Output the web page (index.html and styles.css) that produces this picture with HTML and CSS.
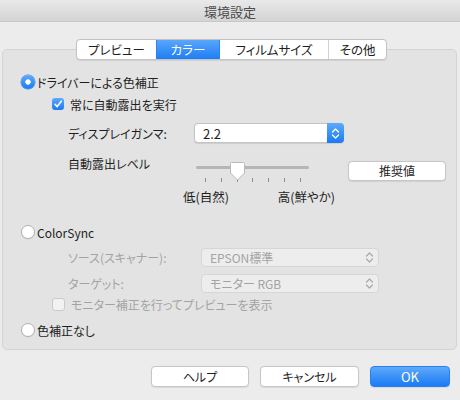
FILE: index.html
```html
<!DOCTYPE html>
<html lang="ja">
<head>
<meta charset="utf-8">
<link rel="stylesheet" href="styles.css">
</head>
<body>
<div class="titlebar">環境設定</div>
<div class="tabs">
  <div class="tab t1">プレビュー</div>
  <div class="tab t2 sel">カラー</div>
  <div class="tab t3">フィルムサイズ</div>
  <div class="tab t4">その他</div>
</div>
<div class="box">
  <div class="row r1"><span class="radio on"></span><span>ドライバーによる色補正</span></div>
  <div class="row r2"><span class="check on"><svg width="12" height="12" viewBox="0 0 12 12"><path d="M3 6.3 L5.2 8.6 L9.3 3.2" fill="none" stroke="#fff" stroke-width="1.6" stroke-linecap="round" stroke-linejoin="round"/></svg></span><span>常に自動露出を実行</span></div>
  <div class="row r3">
    <span class="lbl lbl-gamma">ディスプレイガンマ:</span>
    <div class="popup active w-gamma"><span class="ptext">2.2</span><span class="stepper"><svg width="9" height="13" viewBox="0 0 9 13"><path d="M1.5 5 L4.5 2 L7.5 5 M1.5 8 L4.5 11 L7.5 8" fill="none" stroke="#fff" stroke-width="1.3" stroke-linecap="round" stroke-linejoin="round"/></svg></span></div>
  </div>
  <div class="row4">
    <span class="lbl lbl-al">自動露出レベル</span>
    <div class="slider">
      <div class="track-wrap">
        <div class="track"></div>
        <svg class="knob" width="17" height="21" viewBox="0 0 17 21"><path d="M2.5 1.5 H14.5 Q15.5 1.5 15.5 2.5 V12 L8.5 19 L1.5 12 V2.5 Q1.5 1.5 2.5 1.5 Z" fill="#fff" stroke="#b9b9b9" stroke-width="1"/></svg>
      </div>
      <div class="ticks"><i></i><i></i><i></i><i></i><i></i><i></i><i></i></div>
      <div class="slabels"><span>低(自然)</span><span>高(鮮やか)</span></div>
    </div>
    <div class="btn btn-rec">推奨値</div>
  </div>
  <div class="row r5"><span class="radio off"></span><span>ColorSync</span></div>
  <div class="row r6">
    <span class="lbl dis lbl-src">ソース(スキャナー):</span>
    <div class="popup disabled w-dis"><span class="ptext">EPSON標準</span><span class="chev"><svg width="9" height="13" viewBox="0 0 9 13"><path d="M1.5 5 L4.5 2 L7.5 5 M1.5 8 L4.5 11 L7.5 8" fill="none" stroke="#a9a9a9" stroke-width="1.2" stroke-linecap="round" stroke-linejoin="round"/></svg></span></div>
  </div>
  <div class="row r7">
    <span class="lbl dis lbl-src">ターゲット:</span>
    <div class="popup disabled w-dis"><span class="ptext">モニター RGB</span><span class="chev"><svg width="9" height="13" viewBox="0 0 9 13"><path d="M1.5 5 L4.5 2 L7.5 5 M1.5 8 L4.5 11 L7.5 8" fill="none" stroke="#a9a9a9" stroke-width="1.2" stroke-linecap="round" stroke-linejoin="round"/></svg></span></div>
  </div>
  <div class="row r8"><span class="check off"></span><span class="dis">モニター補正を行ってプレビューを表示</span></div>
  <div class="row r9"><span class="radio off"></span><span>色補正なし</span></div>
</div>
<div class="buttons">
  <div class="btn b-help">ヘルプ</div>
  <div class="btn b-cancel">キャンセル</div>
  <div class="btn b-ok">OK</div>
</div>
</body>
</html>
```
FILE: styles.css
```css
html, body {
  margin: 0;
  padding: 0;
}
body {
  width: 460px;
  height: 400px;
  overflow: hidden;
  background: #ececec;
  font-family: "Noto Sans CJK JP", sans-serif;
  font-size: 12px;
  font-feature-settings: "palt";
  color: #1e1e1e;
}
.titlebar {
  height: 21px;
  border-bottom: 1px solid #c8c8c8;
  background: linear-gradient(#e9e9e9, #d4d4d4);
  text-align: center;
  line-height: 23px;
  font-size: 13px;
  color: #4b4b4b;
}
.tabs {
  position: relative;
  z-index: 1;
  display: flex;
  width: 311px;
  box-sizing: border-box;
  height: 21px;
  margin: 17px 0 0 76px;
  background: #fff;
  border: 1px solid #c3c3c3;
  border-radius: 4px;
  overflow: hidden;
  box-shadow: 0 0.5px 1px rgba(0,0,0,0.08);
}
.tab {
  box-sizing: border-box;
  line-height: 19px;
  text-align: center;
  font-size: 12.5px;
  border-left: 1px solid #d2d2d2;
  color: #1e1e1e;
}
.tab.t1 { width: 79px; border-left: none; }
.tab.t2 { width: 63px; }
.tab.t3 { width: 109px; }
.tab.t4 { width: 58px; }
.tab.sel {
  background: linear-gradient(#5aa6fb, #1d7ef5);
  color: #fff;
  border-left-color: #2a84f2;
}
.tab.sel + .tab { border-left-color: #2a84f2; }

.box {
  box-sizing: border-box;
  height: 301px;
  margin: -11px 3px 0 2px;
  border: 1px solid #d3d3d3;
  border-radius: 5px;
  background: #e3e3e3;
  padding: 22px 0 0 18px;
}
.row {
  display: flex;
  align-items: center;
  height: 20px;
}
.radio {
  box-sizing: border-box;
  width: 14px;
  height: 14px;
  border-radius: 50%;
  margin-right: 2px;
  flex: none;
}
.radio.on {
  background: radial-gradient(circle, #fff 0 2.4px, rgba(255,255,255,0) 3px), linear-gradient(#5ea9fb, #1a7bf4);
  box-shadow: 0 0 0 0.5px #2f7ee8;
}
.radio.off {
  background: #fff;
  border: 1px solid #b3b3b3;
  box-shadow: 0 0.5px 0.5px rgba(0,0,0,0.08);
}
.r2 { margin-top: 2px; padding-left: 31px; }
.check {
  box-sizing: border-box;
  width: 12px;
  height: 12px;
  border-radius: 3px;
  margin-right: 6px;
  flex: none;
  display: flex;
}
.check.on {
  background: linear-gradient(#5ea9fb, #1a7bf4);
}
.check.off {
  background: #f2f2f2;
  border: 1px solid #cacaca;
}
.r3 { margin-top: 9px; height: 20px; }
.lbl { margin-left: 47px; flex: none; }
.lbl-gamma { width: 126px; }
.lbl-src { width: 133px; }
.dis { color: #a3a3a3; }

.popup {
  box-sizing: border-box;
  height: 20px;
  border-radius: 4px;
  display: flex;
  align-items: center;
  justify-content: space-between;
}
.popup .ptext { padding-left: 8px; }
.popup.active {
  background: #fff;
  border: 1px solid #c4c4c4;
  box-shadow: 0 0.5px 1px rgba(0,0,0,0.1);
  font-size: 13px;
}
.w-gamma { width: 150px; }
.stepper {
  align-self: stretch;
  width: 17px;
  margin: -1px -1px -1px 0;
  border-radius: 0 4px 4px 0;
  background: linear-gradient(#5ea9fb, #1a7bf4);
  display: flex;
  align-items: center;
  justify-content: center;
}
.popup.disabled {
  background: #ededed;
  border: 1px solid #d6d6d6;
  color: #a3a3a3;
}
.w-dis { width: 178px; height: 19px; }
.chev {
  width: 17px;
  display: flex;
  align-items: center;
  justify-content: center;
}

.row4 {
  display: flex;
  align-items: flex-start;
  margin-top: 13px;
}
.lbl-al { width: 115px; line-height: 16px; }
.slider {
  width: 152px;
  flex: none;
  display: flex;
  flex-direction: column;
  margin-top: 5px;
}
.track-wrap {
  position: relative;
  width: 113px;
  height: 12px;
  margin-left: 13px;
}
.track {
  margin-top: 5px;
  height: 3px;
  border-radius: 2px;
  background: #b6b6b6;
}
.knob {
  position: absolute;
  left: 33px;
  top: 0;
}
.ticks {
  display: flex;
  justify-content: space-between;
  width: 96px;
  margin: 5px 0 0 22px;
  height: 4px;
}
.ticks i {
  width: 1px;
  height: 4px;
  background: #8e8e8e;
}
.slabels {
  display: flex;
  justify-content: space-between;
  margin-top: 7px;
  line-height: 16px;
  font-size: 12.5px;
}

.btn {
  box-sizing: border-box;
  height: 21px;
  line-height: 19px;
  text-align: center;
  background: #fff;
  border: 1px solid #c6c6c6;
  border-radius: 4px;
  box-shadow: 0 0.5px 1px rgba(0,0,0,0.08);
  flex: none;
}
.btn-rec { width: 98px; height: 20px; line-height: 18px; margin: 5px 0 0 13px; }

.r5 { margin-top: 17px; }
.r6 { margin-top: 5px; }
.r7 { margin-top: 6px; }
.r8 { margin-top: 2px; height: 18px; padding-left: 31px; }
.r8 .check { width: 13px; height: 13px; }
.r9 { margin-top: 7px; }

.buttons {
  display: flex;
  justify-content: flex-end;
  gap: 11px;
  margin-top: 16px;
  padding-right: 10px;
}
.b-help { width: 98px; }
.b-cancel { width: 99px; }
.b-ok {
  width: 80px;
  background: linear-gradient(#5ea9fb, #1a7bf4);
  border-color: #2a7ff0;
  color: #fff;
  font-size: 13px;
}
```
